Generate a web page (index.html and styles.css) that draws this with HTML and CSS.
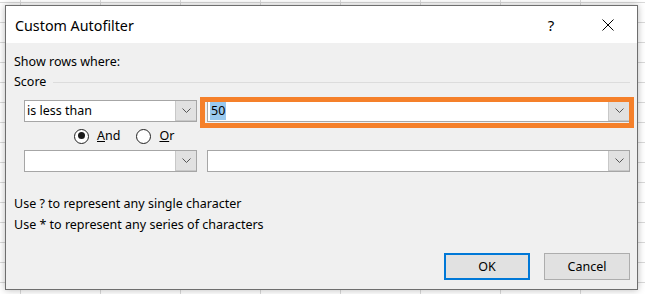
FILE: index.html
```html
<!DOCTYPE html>
<html>
<head>
<meta charset="utf-8">
<link rel="stylesheet" href="styles.css">
</head>
<body>
<div class="dialog">
  <div class="titlebar">
    <span class="title">Custom Autofilter</span>
    <span class="help">?</span>
    <span class="close">
      <svg width="12" height="12" viewBox="0 0 12 12"><path d="M0.5 0.5 L11.5 11.5 M11.5 0.5 L0.5 11.5" stroke="#000" stroke-width="1" fill="none"/></svg>
    </span>
  </div>
  <div class="body">
    <div class="label">Show rows where:</div>
    <div class="group"><span class="label">Score</span><span class="rule"></span></div>
    <div class="row">
      <div class="combo combo-op">
        <span class="value">is less than</span>
        <span class="drop"><svg width="9" height="5" viewBox="0 0 9 5"><path d="M0.5 0.5 L4.5 4.5 L8.5 0.5" stroke="#555" fill="none"/></svg></span>
      </div>
      <div class="combo combo-val highlighted">
        <span class="value"><span class="sel">50</span></span>
        <span class="drop"><svg width="9" height="5" viewBox="0 0 9 5"><path d="M0.5 0.5 L4.5 4.5 L8.5 0.5" stroke="#555" fill="none"/></svg></span>
        <span class="marker"></span>
      </div>
    </div>
    <div class="radios">
      <span class="radio checked"></span><span class="rlabel"><u>A</u>nd</span>
      <span class="radio"></span><span class="rlabel"><u>O</u>r</span>
    </div>
    <div class="row">
      <div class="combo combo-op">
        <span class="value"></span>
        <span class="drop"><svg width="9" height="5" viewBox="0 0 9 5"><path d="M0.5 0.5 L4.5 4.5 L8.5 0.5" stroke="#555" fill="none"/></svg></span>
      </div>
      <div class="combo combo-val">
        <span class="value"></span>
        <span class="drop"><svg width="9" height="5" viewBox="0 0 9 5"><path d="M0.5 0.5 L4.5 4.5 L8.5 0.5" stroke="#555" fill="none"/></svg></span>
      </div>
    </div>
    <div class="label hint1">Use ? to represent any single character</div>
    <div class="label hint2">Use * to represent any series of characters</div>
    <div class="buttons">
      <button class="btn default">OK</button>
      <button class="btn">Cancel</button>
    </div>
  </div>
</div>
</body>
</html>
```
FILE: styles.css
```css
html, body {
  margin: 0;
  padding: 0;
}
body {
  width: 645px;
  height: 294px;
  overflow: hidden;
  padding: 5px;
  box-sizing: border-box;
  background-color: #fff;
  background-image:
    linear-gradient(to right, #d9d9d9 1px, transparent 1px),
    linear-gradient(to bottom, #d9d9d9 1px, transparent 1px);
  background-size: 80px 20px;
  background-position: 20px 2px;
  font-family: "Noto Sans", "DejaVu Sans", sans-serif;
  font-size: 12.5px;
  color: #000;
}
.dialog {
  width: 633px;
  height: 285px;
  box-sizing: border-box;
  border: 1px solid #6e6e6e;
  background: #f0f0f0;
  box-shadow: 0 0 7px rgba(0,0,0,0.28);
  display: flex;
  flex-direction: column;
}
.titlebar {
  height: 37px;
  background: #fff;
  display: flex;
  align-items: center;
  padding-left: 9px;
}
.title {
  font-size: 14.3px;
  flex: 1;
  margin-top: 1px;
}
.help {
  font-size: 15px;
  width: 12px;
  text-align: center;
  margin-right: 45px;
}
.close {
  display: flex;
  width: 12px;
  height: 12px;
  margin-right: 23px;
}
.body {
  padding: 11px 7px 0 8px;
  display: flex;
  flex-direction: column;
}
.label {
  line-height: 16px;
  height: 16px;
  white-space: nowrap;
}
.group {
  margin-top: 4px;
  display: flex;
  align-items: center;
  height: 16px;
}
.rule {
  flex: 1;
  height: 1px;
  background: #dcdcdc;
  margin-left: 7px;
  margin-top: 1px;
}
.row {
  display: flex;
  gap: 10px;
  padding-left: 10px;
  margin-top: 10px;
}
.row + .radios + .row {
  margin-top: 6px;
}
.combo {
  position: relative;
  height: 22px;
  box-sizing: border-box;
  border: 1px solid #a6a6a6;
  background: #fff;
  display: flex;
  align-items: stretch;
}
.combo-op { width: 173px; }
.combo-val { width: 423px; }
.value {
  flex: 1;
  line-height: 20px;
  padding-left: 2px;
}
.sel {
  background: #99c9ef;
  padding: 1px 1px;
}
.drop {
  width: 20px;
  background: #e1e1e1;
  border: 1px solid #c8c8c8;
  border-right: 0;
  border-top: 0;
  display: flex;
  align-items: center;
  justify-content: center;
}
.highlighted .marker {
  position: absolute;
  left: -8px;
  right: -5px;
  top: -4px;
  bottom: -7px;
  border: 5px solid #f5802a;
  pointer-events: none;
}
.radios {
  margin-top: 6px;
  height: 16px;
  display: flex;
  align-items: center;
  padding-left: 60px;
}
.radio {
  width: 15px;
  height: 15px;
  box-sizing: border-box;
  border: 1.5px solid #222;
  border-radius: 50%;
  background: #fff;
  position: relative;
}
.radio.checked::after {
  content: "";
  position: absolute;
  left: 2.5px;
  top: 2.5px;
  width: 7px;
  height: 7px;
  border-radius: 50%;
  background: #1a1a1a;
}
.rlabel {
  margin-left: 8px;
  margin-right: 16px;
  line-height: 16px;
}
.hint1 { margin-top: 24px; }
.hint2 { margin-top: 5px; }
.buttons {
  margin-top: 20px;
  display: flex;
  justify-content: flex-end;
  gap: 14px;
}
.btn {
  font-family: inherit;
  font-size: 12.5px;
  width: 86px;
  height: 27px;
  box-sizing: border-box;
  background: #e1e1e1;
  border: 1px solid #adadad;
  color: #000;
  padding: 0;
  margin: 0;
}
.btn.default {
  border: 2px solid #0078d7;
}
```
